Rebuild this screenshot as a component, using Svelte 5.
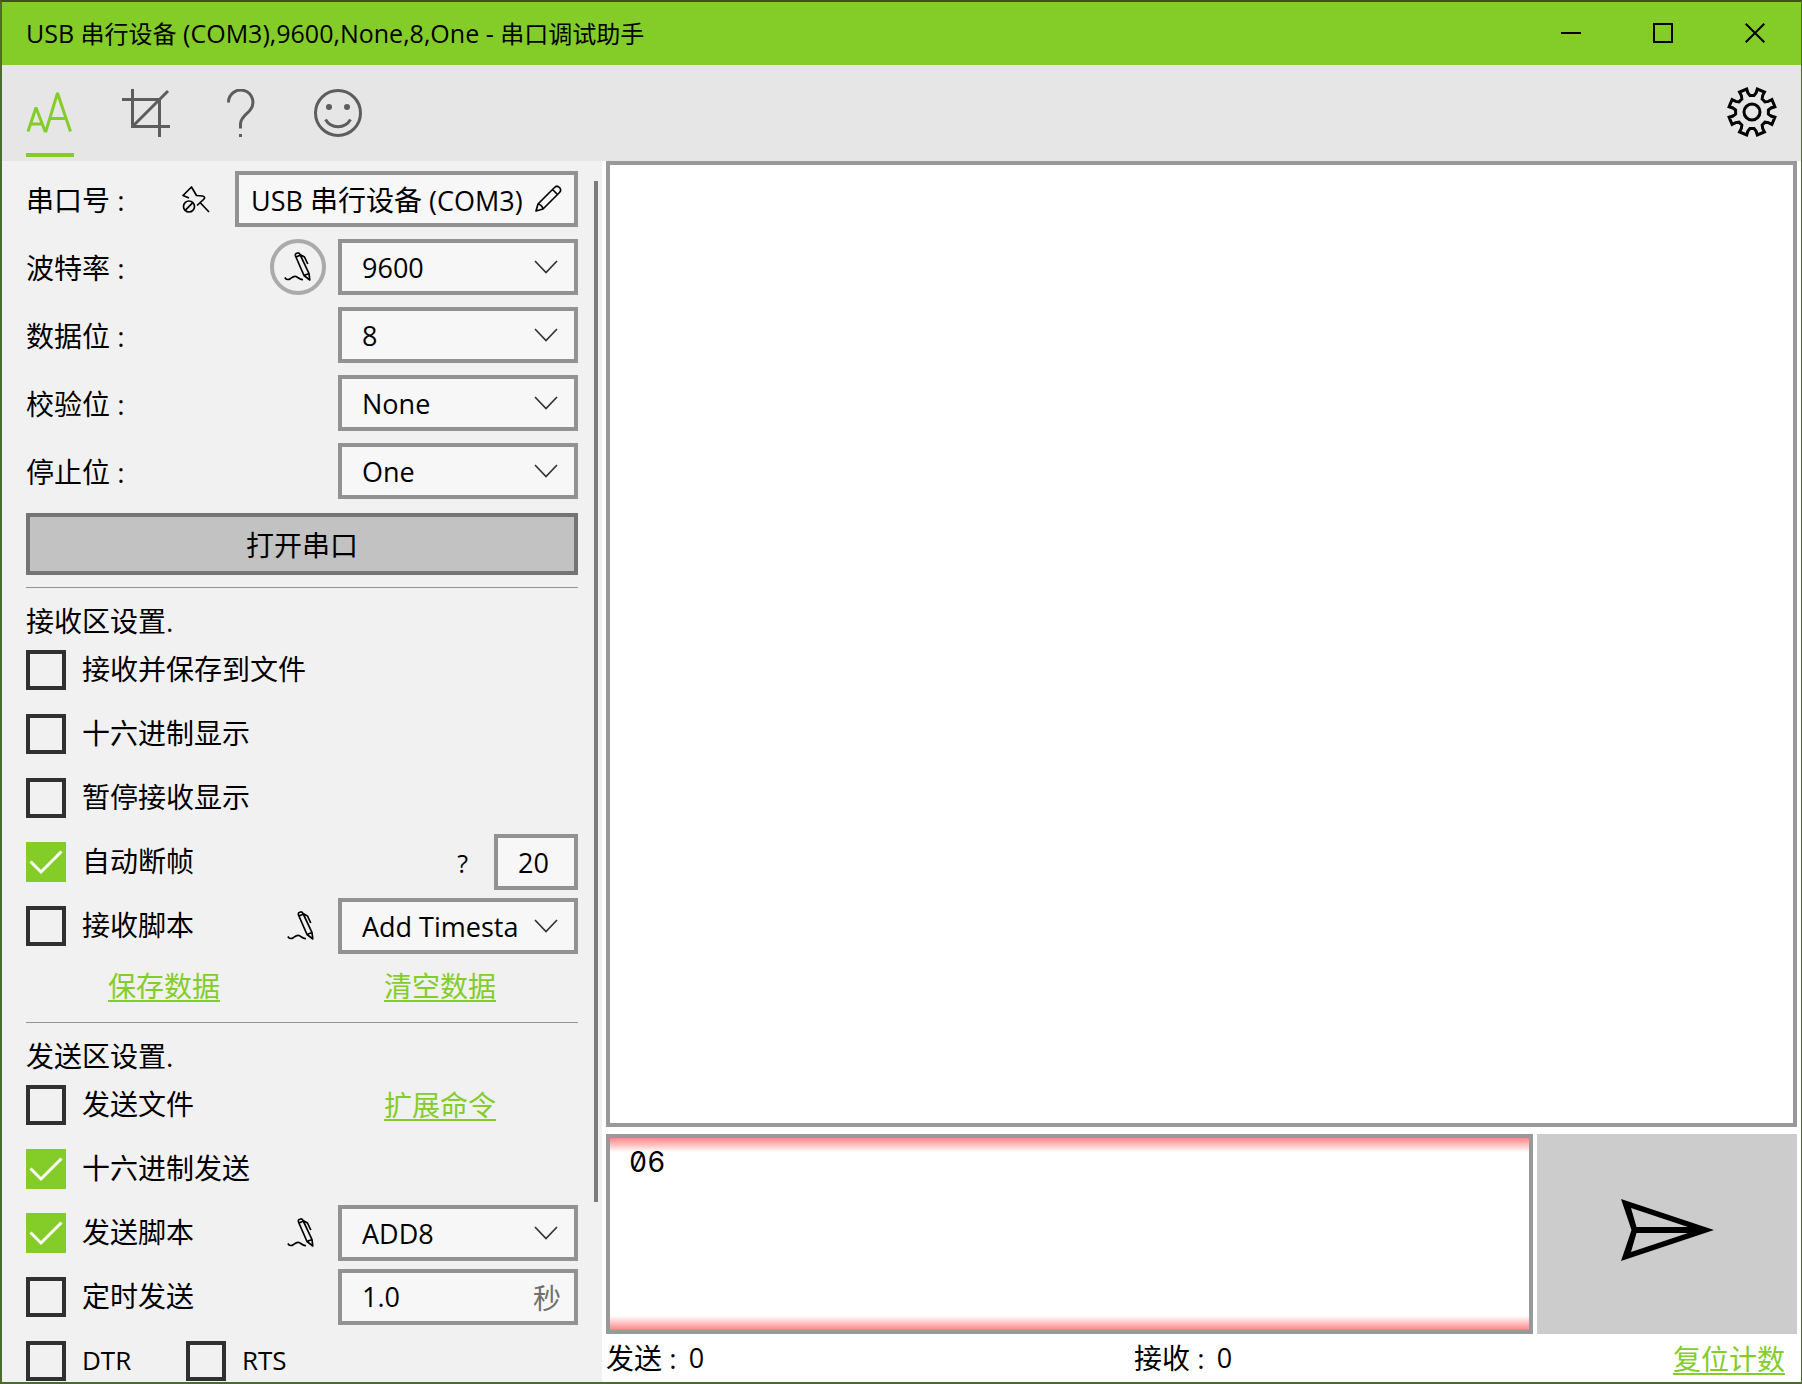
<script>
  const serialFields = [
    { id: 'baud', label: '波特率 :', value: '9600', options: ['9600', '19200', '115200'], pen: true },
    { id: 'data', label: '数据位 :', value: '8', options: ['8', '7', '6', '5'] },
    { id: 'parity', label: '校验位 :', value: 'None', options: ['None', 'Odd', 'Even'] },
    { id: 'stop', label: '停止位 :', value: 'One', options: ['One', 'Two'] }
  ];

  let sendText = $state('06');

  // Eight-toothed gear outline; every tooth sits between two notches.
  function gearPath() {
    const points = [];
    const add = (r, deg) => {
      const a = (deg * Math.PI) / 180;
      points.push(`${(25 + r * Math.sin(a)).toFixed(2)} ${(25 - r * Math.cos(a)).toFixed(2)}`);
    };
    for (let k = 0; k < 8; k++) {
      const n = k * 45;
      add(16.5, n - 7);
      add(16.5, n + 7);
      add(19.5, n + 12);
      add(23.5, n + 13);
      add(23.5, n + 32);
      add(19.5, n + 33);
    }
    return `M${points.join('L')}Z`;
  }
</script>

{#snippet penIcon()}
  <svg class="line-icon" width="28" height="30" viewBox="0 0 28 30" aria-hidden="true">
    <path d="M.8 25.500C2.500 28 4.500 28 6.500 26.500S10 23.800 12 24.500 16 28 19 27.500" />
    <path d="M11.500 4C11 2 12 1.200 13.500 1S15.500 1.500 16 2.500L25 21.500 25.800 28 20 23.500ZM12 5L16.500 3M20 23.500L25 21.500M16 2.500L20.500 5 23.800 12" />
  </svg>
{/snippet}

{#snippet combo(id, value, options, name)}
  <div class="combo">
    <select {id} aria-label={name} {value}>
      {#each options as o}<option>{o}</option>{/each}
    </select>
    <svg class="chevron" width="24" height="14" viewBox="0 0 24 14" aria-hidden="true"><path d="M1 1L12 12.500 23 1" /></svg>
  </div>
{/snippet}

{#snippet check(label, checked)}
  <label class="check">
    <span class="box">
      <input type="checkbox" {checked} />
      <svg width="40" height="40" viewBox="0 0 40 40" aria-hidden="true"><path d="M4.500 19.500L15 30 35.500 9.500" /></svg>
    </span>
    <span class="caption">{label}</span>
  </label>
{/snippet}

<div class="window">
  <header class="titlebar">
    <h1>USB <b>串行设备</b> (COM3),9600,None,8,One - <b>串口调试助手</b></h1>
    <button aria-label="最小化"><svg width="20" height="20" viewBox="0 0 20 20"><path d="M0 10H20" /></svg></button>
    <button aria-label="最大化"><svg width="20" height="20" viewBox="0 0 20 20"><path d="M1 1H19V19H1Z" /></svg></button>
    <button aria-label="关闭"><svg width="20" height="20" viewBox="0 0 20 20"><path d="M.7 .7L19.300 19.300M19.300 .7L.7 19.300" /></svg></button>
  </header>

  <nav class="toolbar">
    <button class="tab active" aria-label="字体">
      <svg width="48" height="48" viewBox="0 0 48 48"><path d="M2 42.500L9.700 19.500H10.300L19 42H20L31.200 5H31.800L44.500 42.500M5 35H16M23.500 29.500H40" /></svg>
    </button>
    <button class="tab" aria-label="裁剪">
      <svg width="48" height="48" viewBox="0 0 48 48"><path d="M10.500 0V37.500H48M0 10.500H37.500V48M11 37L46 2" /></svg>
    </button>
    <button class="tab" aria-label="帮助">
      <svg width="48" height="48" viewBox="0 0 48 48"><path d="M10.500 13.500A12.200 12.200 0 1 1 32.500 20.500C29.500 25 22.500 28 22.500 35V39.500M22.500 45V48" /></svg>
    </button>
    <button class="tab" aria-label="反馈">
      <svg width="48" height="48" viewBox="0 0 48 48"><circle cx="24" cy="24" r="22.500" /><path d="M11.500 30.500C17 40 31 40 36.500 30.500" /><circle class="dot" cx="15" cy="18" r="3" /><circle class="dot" cx="33" cy="18" r="3" /></svg>
    </button>
    <button class="gear" aria-label="设置">
      <svg width="50" height="50" viewBox="0 0 50 50"><path d={gearPath()} /><circle cx="25" cy="25" r="8" /></svg>
    </button>
  </nav>

  <div class="body">
    <aside>
      <div class="panel">
        <div class="fields">
          <div class="row">
            <span class="name">串口号 :</span>
            <button class="icon-button pin" aria-label="取消固定">
              <svg class="line-icon" width="28" height="28" viewBox="0 0 28 28"><path d="M7 12L1 9.500 9.500 1 14.500 9.500 20.500 10C23 10.500 23 12 21.500 13.500L15 19.500M18.500 17L27 26" /><circle cx="7" cy="20.500" r="5.500" /><path d="M3.200 24.300L10.800 16.700" /></svg>
            </button>
            <button class="port">
              <span>USB <b>串行设备</b> (COM3)</span>
              <svg class="line-icon" width="27" height="27" viewBox="0 0 27 27"><path d="M1 26L3 19 19.500 2.500C21 1 23 1 24.500 2.500S26 6 24.500 7.500L8 24ZM17.500 4.500L22.500 9.500M3 19C5.500 19.500 7.500 21.500 8 24" /></svg>
            </button>
          </div>
          {#each serialFields as f}
            <div class="row">
              <label class="name" for={f.id}>{f.label}</label>
              {#if f.pen}<button class="icon-button ring" aria-label="自定义波特率">{@render penIcon()}</button>{/if}
              {@render combo(f.id, f.value, f.options)}
            </div>
          {/each}
        </div>
        <button class="open">打开串口</button>

        <section>
          <h2>接收区设置.</h2>
          <div class="options">
            <div class="row">{@render check('接收并保存到文件', false)}</div>
            <div class="row">{@render check('十六进制显示', false)}</div>
            <div class="row">{@render check('暂停接收显示', false)}</div>
            <div class="row">
              {@render check('自动断帧', true)}
              <button class="icon-button help" aria-label="断帧说明">?</button>
              <input class="field short" aria-label="断帧时间" value="20" />
            </div>
            <div class="row">
              {@render check('接收脚本', false)}
              <button class="icon-button pen" aria-label="编辑接收脚本">{@render penIcon()}</button>
              {@render combo('rx-script', 'Add Timesta', ['Add Timesta'], '接收脚本')}
            </div>
          </div>
          <div class="links">
            <a href="#save">保存数据</a>
            <a href="#clear">清空数据</a>
          </div>
        </section>

        <section>
          <h2>发送区设置.</h2>
          <div class="options">
            <div class="row halves">
              {@render check('发送文件', false)}
              <a href="#extend">扩展命令</a>
            </div>
            <div class="row">{@render check('十六进制发送', true)}</div>
            <div class="row">
              {@render check('发送脚本', true)}
              <button class="icon-button pen" aria-label="编辑发送脚本">{@render penIcon()}</button>
              {@render combo('tx-script', 'ADD8', ['ADD8'], '发送脚本')}
            </div>
            <div class="row">
              {@render check('定时发送', false)}
              <label class="field timed"><input aria-label="发送间隔" value="1.0" /><span>秒</span></label>
            </div>
            <div class="row signals">
              {@render check('DTR', false)}
              {@render check('RTS', false)}
            </div>
          </div>
        </section>
      </div>
      <div class="track"><div class="thumb"></div></div>
    </aside>

    <main>
      <textarea class="receive" aria-label="接收区" readonly></textarea>
      <div class="send">
        <textarea aria-label="发送区" bind:value={sendText}></textarea>
        <button aria-label="发送">
          <svg width="93" height="62" viewBox="0 0 93 62"><path fill-rule="evenodd" d="M0 0L93 31 0 62 10.500 31ZM10 9L15.500 28H67ZM10 53L15.500 34H67Z" /></svg>
        </button>
      </div>
      <footer>
        <span class="count">发送 : <i>0</i></span>
        <span class="count">接收 : <i>0</i></span>
        <a href="#reset">复位计数</a>
      </footer>
    </main>
  </div>
</div>

<style>
  :global(body) {
    margin: 0;
  }
  .window,
  .window * {
    box-sizing: border-box;
  }
  .window {
    --green: #84cd29;
    display: flex;
    flex-direction: column;
    height: 100vh;
    overflow: hidden;
    border: 2px solid #4d6a2f;
    border-top-color: #3f4d29;
    border-right-width: 1px;
    background: #fff;
    color: #000;
    font: 28px/40px 'Open Sans', 'Noto Sans CJK SC', sans-serif;
  }
  button,
  select,
  input,
  textarea {
    margin: 0;
    padding: 0;
    border: 0;
    border-radius: 0;
    background: none;
    color: inherit;
    font: inherit;
  }
  svg {
    display: block;
    fill: none;
    stroke: currentColor;
  }
  b {
    font-weight: 400;
  }
  a {
    color: var(--green);
    text-decoration-thickness: 2px;
    text-underline-offset: 3px;
  }

  .titlebar {
    display: flex;
    flex: none;
    height: 63px;
    background: var(--green);
  }
  h1 {
    flex: 1;
    margin: 0;
    padding-left: 24px;
    font-size: 25px;
    font-weight: 400;
    line-height: 62px;
    white-space: nowrap;
  }
  h1 b {
    font-size: 24px;
  }
  .titlebar button {
    display: grid;
    place-items: center;
    width: 92px;
    padding-bottom: 2px;
  }
  .titlebar svg {
    stroke-width: 2;
  }

  .toolbar {
    display: flex;
    flex: none;
    gap: 48px;
    height: 96px;
    padding: 0 24px;
    background: #e6e6e6;
    color: #5d5d5d;
  }
  .tab {
    height: 92px;
    padding-top: 8px;
    border-bottom: 4px solid transparent;
  }
  .tab svg {
    stroke-width: 3;
  }
  .tab.active {
    border-color: var(--green);
    color: var(--green);
  }
  .dot {
    fill: currentColor;
    stroke: none;
  }
  .gear {
    margin-left: auto;
    padding-bottom: 2px;
    color: #000;
  }
  .gear svg {
    stroke-width: 3;
  }

  .body {
    display: flex;
    flex: 1;
    min-height: 0;
  }
  aside {
    display: flex;
    flex: none;
    width: 600px;
    padding: 0 4px 0 24px;
    overflow: hidden;
    background: #f1f1f1;
  }
  .panel {
    width: 552px;
    padding-top: 10px;
  }
  .track {
    flex: 1;
    height: 100%;
    padding: 20px 0 0 16px;
  }
  .thumb {
    width: 4px;
    height: 85%;
    background: #7c7c7c;
  }
  .fields {
    display: grid;
    gap: 12px;
  }
  .row {
    display: flex;
    align-items: center;
    height: 56px;
  }
  .name {
    margin-right: auto;
    padding-top: 2px;
  }
  .icon-button {
    display: grid;
    place-items: center;
  }
  .line-icon {
    stroke-width: 1.7;
    stroke-linejoin: round;
  }
  .pin {
    margin-right: 25px;
    padding-top: 2px;
  }
  .ring {
    width: 56px;
    height: 56px;
    margin-right: 12px;
    border: 4px solid #aaa;
    border-radius: 50%;
  }
  .pen {
    margin: 0 23px 0 auto;
  }
  .help {
    margin: 0 26px 0 auto;
    padding-top: 2px;
    font-size: 25px;
  }
  .port,
  .combo,
  .field {
    height: 56px;
    border: 4px solid #929292;
    background: #f7f7f7;
    font-size: 27px;
  }
  .port {
    display: flex;
    align-items: center;
    justify-content: space-between;
    width: 343px;
    padding: 0 12px;
    white-space: nowrap;
  }
  .port span {
    padding-top: 2px;
  }
  .port svg {
    margin-bottom: 2px;
  }
  .port b {
    font-size: 28px;
  }
  .combo {
    position: relative;
    width: 240px;
  }
  .combo select {
    width: 100%;
    height: 100%;
    padding: 2px 52px 0 20px;
    appearance: none;
  }
  .chevron {
    position: absolute;
    top: 17px;
    right: 16px;
    stroke: #333;
    stroke-width: 1.7;
    pointer-events: none;
  }
  .short {
    width: 84px;
    padding-left: 20px;
  }
  .timed {
    display: flex;
    align-items: center;
    width: 240px;
    margin-left: auto;
    padding: 0 13px 0 20px;
  }
  .timed input {
    flex: 1;
    min-width: 0;
  }
  .timed span {
    padding-top: 2px;
    color: #707070;
    font-size: 28px;
  }
  .open {
    width: 100%;
    height: 62px;
    margin: 14px 0 12px;
    padding-top: 2px;
    border: 4px solid #747474;
    background: #c2c2c2;
  }

  section {
    border-top: 1px solid #929292;
  }
  h2 {
    margin: 0;
    padding: 13px 0 1px;
    font-size: 28px;
    font-weight: 400;
  }
  .options {
    display: grid;
    gap: 8px;
  }
  .check {
    display: flex;
    align-items: center;
    gap: 16px;
    white-space: nowrap;
  }
  .caption {
    padding-bottom: 2px;
  }
  .box {
    position: relative;
    width: 40px;
    height: 40px;
  }
  .box input {
    display: block;
    width: 40px;
    height: 40px;
    border: 4px solid #303030;
    appearance: none;
  }
  .box input:checked {
    border-color: var(--green);
    background: var(--green);
  }
  .box svg {
    position: absolute;
    inset: 0;
    visibility: hidden;
    stroke: #fff;
    stroke-width: 3;
    pointer-events: none;
  }
  .box input:checked + svg {
    visibility: visible;
  }
  .links,
  .halves {
    display: grid;
    grid-template-columns: 1fr 1fr;
    align-items: center;
  }
  .links a,
  .halves a {
    justify-self: center;
  }
  .links {
    height: 68px;
    padding-bottom: 4px;
  }
  .signals {
    display: grid;
    grid-template-columns: 160px 1fr;
    font-size: 26px;
  }

  main {
    display: flex;
    flex: 1;
    flex-direction: column;
    min-width: 0;
    padding: 0 4px;
  }
  .receive,
  .send textarea {
    border: 4px solid #999;
    outline: none;
    resize: none;
  }
  .receive {
    flex: 1;
    margin-bottom: 7px;
  }
  .send {
    display: flex;
    flex: none;
    gap: 4px;
    height: 200px;
  }
  .send textarea {
    flex: 1;
    min-width: 0;
    padding: 4px 19px;
    background:
      linear-gradient(#ff8585, #fff) top / 100% 14px no-repeat,
      linear-gradient(#fff, #ff8585) bottom / 100% 14px no-repeat,
      #fff;
    font-family: Inter, 'Noto Sans CJK SC', sans-serif;
    font-feature-settings: 'zero', 'tnum';
  }
  .send button {
    display: grid;
    place-items: center;
    width: 260px;
    padding-bottom: 8px;
    background: #ccc;
  }
  .send button svg {
    fill: #000;
    stroke: none;
  }
  footer {
    display: grid;
    flex: none;
    grid-template-columns: 528fr 400fr 263fr;
    align-items: center;
    height: 48px;
    padding-top: 2px;
  }
  .count {
    display: flex;
    gap: 12px;
    padding-bottom: 2px;
  }
  footer i {
    font-size: 27px;
    font-style: normal;
  }
  footer a {
    justify-self: end;
    margin-right: 12px;
  }
</style>
